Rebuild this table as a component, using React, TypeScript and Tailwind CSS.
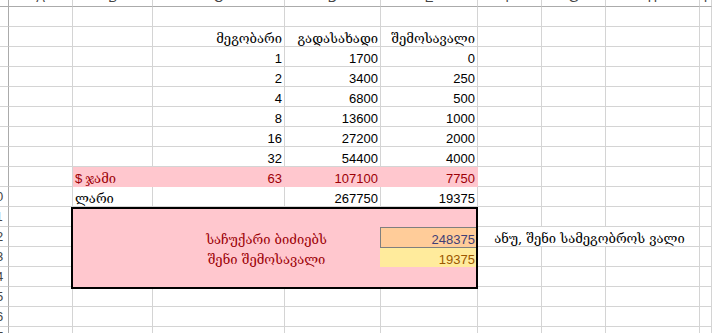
import React from "react";
import clsx from "clsx";

const GEO = "font-['DejaVu_Serif','DejaVu_Sans',sans-serif]";

function Cell({
  children,
  className,
  right,
}: {
  children?: React.ReactNode;
  className?: string;
  right?: boolean;
}) {
  return (
    <div
      className={clsx(
        "flex items-end overflow-hidden whitespace-nowrap border-r border-b border-[#d4d4d4] leading-[15px]",
        right ? "justify-end pr-[2px]" : "pl-[2px]",
        className
      )}
    >
      {children}
    </div>
  );
}

function RowHead({ n }: { n: number }) {
  return (
    <div className="flex items-center justify-end overflow-hidden border-r border-b border-r-[#ababab] border-b-[#d4d4d4]">
      <span className="w-[24px] shrink-0 text-center text-[#444]">{n}</span>
    </div>
  );
}

function Empty({ n = 1 }: { n?: number }) {
  return (
    <>
      {Array.from({ length: n }).map((_, i) => (
        <Cell key={i} />
      ))}
    </>
  );
}

const nums: [string, string, string][] = [
  ["1", "1700", "0"],
  ["2", "3400", "250"],
  ["4", "6800", "500"],
  ["8", "13600", "1000"],
  ["16", "27200", "2000"],
  ["32", "54400", "4000"],
];

const pink = "bg-[#ffc7ce] text-[#9c0006] border-[#ffc7ce]";

export default function App() {
  const letters = ["A", "B", "C", "D", "E", "F", "G", "H", "I"];
  return (
    <div className="h-[333px] w-[712px] overflow-hidden bg-white font-['Liberation_Sans',Arial,sans-serif] text-[13px] text-black">
      <div className="grid grid-cols-[9px_64px_80px_132px_96px_97px_64px_64px_94px_1fr] grid-rows-[7px_repeat(17,20px)]">
        {/* column headers */}
        <div className="border-r border-b border-[#ababab]" />
        {letters.map((l) => (
          <div
            key={l}
            className="flex items-end justify-center overflow-hidden border-r border-b border-r-[#d4d4d4] border-b-[#ababab]"
          >
            <span className="shrink-0 leading-[17px] text-[#444]">{l}</span>
          </div>
        ))}

        {/* 1 */}
        <RowHead n={1} />
        <Empty n={9} />

        {/* 2 */}
        <RowHead n={2} />
        <Empty n={2} />
        <Cell right className={GEO}>მეგობარი</Cell>
        <Cell right className={GEO}>გადასახადი</Cell>
        <Cell right className={GEO}>შემოსავალი</Cell>
        <Empty n={4} />

        {/* 3 - 8 */}
        {nums.map((r, i) => (
          <React.Fragment key={i}>
            <RowHead n={i + 3} />
            <Empty n={2} />
            <Cell right>{r[0]}</Cell>
            <Cell right>{r[1]}</Cell>
            <Cell right>{r[2]}</Cell>
            <Empty n={4} />
          </React.Fragment>
        ))}

        {/* 9 total */}
        <RowHead n={9} />
        <Empty />
        <Cell className={pink}>
          $ <span className={clsx(GEO, "ml-[3px]")}>ჯამი</span>
        </Cell>
        <Cell right className={pink}>63</Cell>
        <Cell right className={pink}>107100</Cell>
        <Cell right className={pink}>7750</Cell>
        <Empty n={4} />

        {/* 10 */}
        <RowHead n={10} />
        <Empty />
        <Cell className={GEO}>ლარი</Cell>
        <Empty />
        <Cell right>267750</Cell>
        <Cell right>19375</Cell>
        <Empty n={4} />

        {/* summary box rows 11-14 */}
        <div className="relative z-10 col-start-3 col-span-4 row-start-12 row-span-4 -mb-[2px] -ml-[2px] grid grid-cols-[80px_227px_1fr] grid-rows-[18px_21px_19px_1fr] border-2 border-black bg-[#ffc7ce] leading-[15px] text-[#9c0006]">
          <div className="col-span-3" />
          <div />
          <div className={clsx(GEO, "flex items-end justify-center pb-[1px]")}>საჩუქარი ბიძიებს</div>
          <div className="flex items-end justify-end border border-r-0 border-[#7f7f7f] bg-[#ffcc99] pr-[1px] text-[#3f3f76]">
            248375
          </div>
          <div />
          <div className={clsx(GEO, "flex items-end justify-center")}>შენი შემოსავალი</div>
          <div className="flex items-end justify-end bg-[#ffeb9c] pr-[1px] text-[#9c5700]">19375</div>
          <div className="col-span-3" />
        </div>

        <RowHead n={11} />
        <Empty />
        <Empty n={4} />

        <RowHead n={12} />
        <Empty />
        <Cell className={clsx(GEO, "col-span-3 justify-center pl-0")}>ანუ, შენი სამეგობროს ვალი</Cell>
        <Empty />

        <RowHead n={13} />
        <Empty />
        <Empty n={4} />

        <RowHead n={14} />
        <Empty />
        <Empty n={4} />

        {[15, 16, 17].map((n) => (
          <React.Fragment key={n}>
            <RowHead n={n} />
            <Empty n={9} />
          </React.Fragment>
        ))}
      </div>
    </div>
  );
}
